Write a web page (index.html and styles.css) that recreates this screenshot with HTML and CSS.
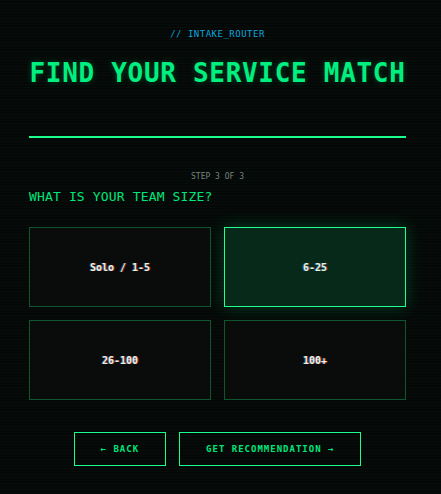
FILE: index.html
```html
<!DOCTYPE html>
<html lang="en">
<head>
  <meta charset="UTF-8">
  <meta name="viewport" content="width=device-width, initial-scale=1.0">
  <title>Intake Router</title>
  <link rel="stylesheet" href="styles.css">
</head>
<body>
  <div class="wrap">
    <!-- header -->
    <header class="head">
      <p class="tag">// INTAKE_ROUTER</p>
      <h1 class="title">FIND YOUR SERVICE MATCH</h1>
    </header>
    <div class="rule"></div>

    <!-- step -->
    <p class="step">STEP 3 OF 3</p>
    <h2 class="question">WHAT IS YOUR TEAM SIZE?</h2>

    <div class="options">
      <button class="option">Solo / 1-5</button>
      <button class="option selected">6-25</button>
      <button class="option">26-100</button>
      <button class="option">100+</button>
    </div>

    <div class="actions">
      <button class="nav-btn">&larr; BACK</button>
      <button class="nav-btn">GET RECOMMENDATION &rarr;</button>
    </div>
  </div>
</body>
</html>
```

FILE: styles.css
```css
/* base */
* {
  box-sizing: border-box;
}
body {
  margin: 0;
  min-height: 494px;
  font-family: "DejaVu Sans Mono", "Liberation Mono", monospace;
  color: #00ff88;
  background-color: #050807;
  background-image: repeating-linear-gradient(
    to bottom,
    rgba(0, 255, 136, 0.025) 0,
    rgba(0, 255, 136, 0.025) 1px,
    transparent 1px,
    transparent 3px
  );
}

.wrap {
  width: 377px;
  margin-left: 29px;
  padding-top: 28px;
}

/* header */
.head {
  text-align: center;
}
.tag {
  margin: 0;
  font-size: 9px;
  line-height: 12px;
  letter-spacing: 0.5px;
  color: #0aa6dc;
}
.title {
  margin: 18px 0 0;
  font-size: 26px;
  line-height: 30px;
  font-weight: bold;
  letter-spacing: 0.7px;
  color: #00f080;
  text-shadow: 0 0 6px rgba(0, 255, 136, 0.25);
}
.rule {
  height: 2px;
  margin-top: 48px;
  background: #1aff8c;
}

/* step + question */
.step {
  margin: 34px 0 0;
  text-align: center;
  font-size: 8px;
  line-height: 10px;
  color: #76847b;
}
.question {
  margin: 7px 0 0;
  font-size: 13px;
  line-height: 16px;
  font-weight: normal;
  letter-spacing: 0.15px;
  color: #00e67a;
}

/* options grid */
.options {
  display: grid;
  grid-template-columns: 1fr 1fr;
  gap: 13px;
  margin-top: 22px;
}
.option {
  height: 80px;
  background: #0a0c0b;
  border: 1px solid #0f5530;
  font-family: inherit;
  font-size: 10px;
  font-weight: bold;
  color: #f2f0dc;
  text-shadow: -1px 0 rgba(40, 150, 255, 0.55), 1px 0 rgba(255, 60, 40, 0.55);
  cursor: pointer;
}
.option.selected {
  background: #06291a;
  border-color: #22ff8c;
  color: #dff5e4;
  box-shadow: 0 0 16px rgba(0, 255, 136, 0.22);
}

/* bottom buttons */
.actions {
  display: flex;
  justify-content: center;
  gap: 13px;
  margin-top: 32px;
}
.nav-btn {
  height: 34px;
  padding: 0 26px;
  background: transparent;
  border: 1px solid #1aff8c;
  font-family: inherit;
  font-size: 9px;
  font-weight: bold;
  letter-spacing: 1px;
  color: #00e67a;
  cursor: pointer;
}
```
